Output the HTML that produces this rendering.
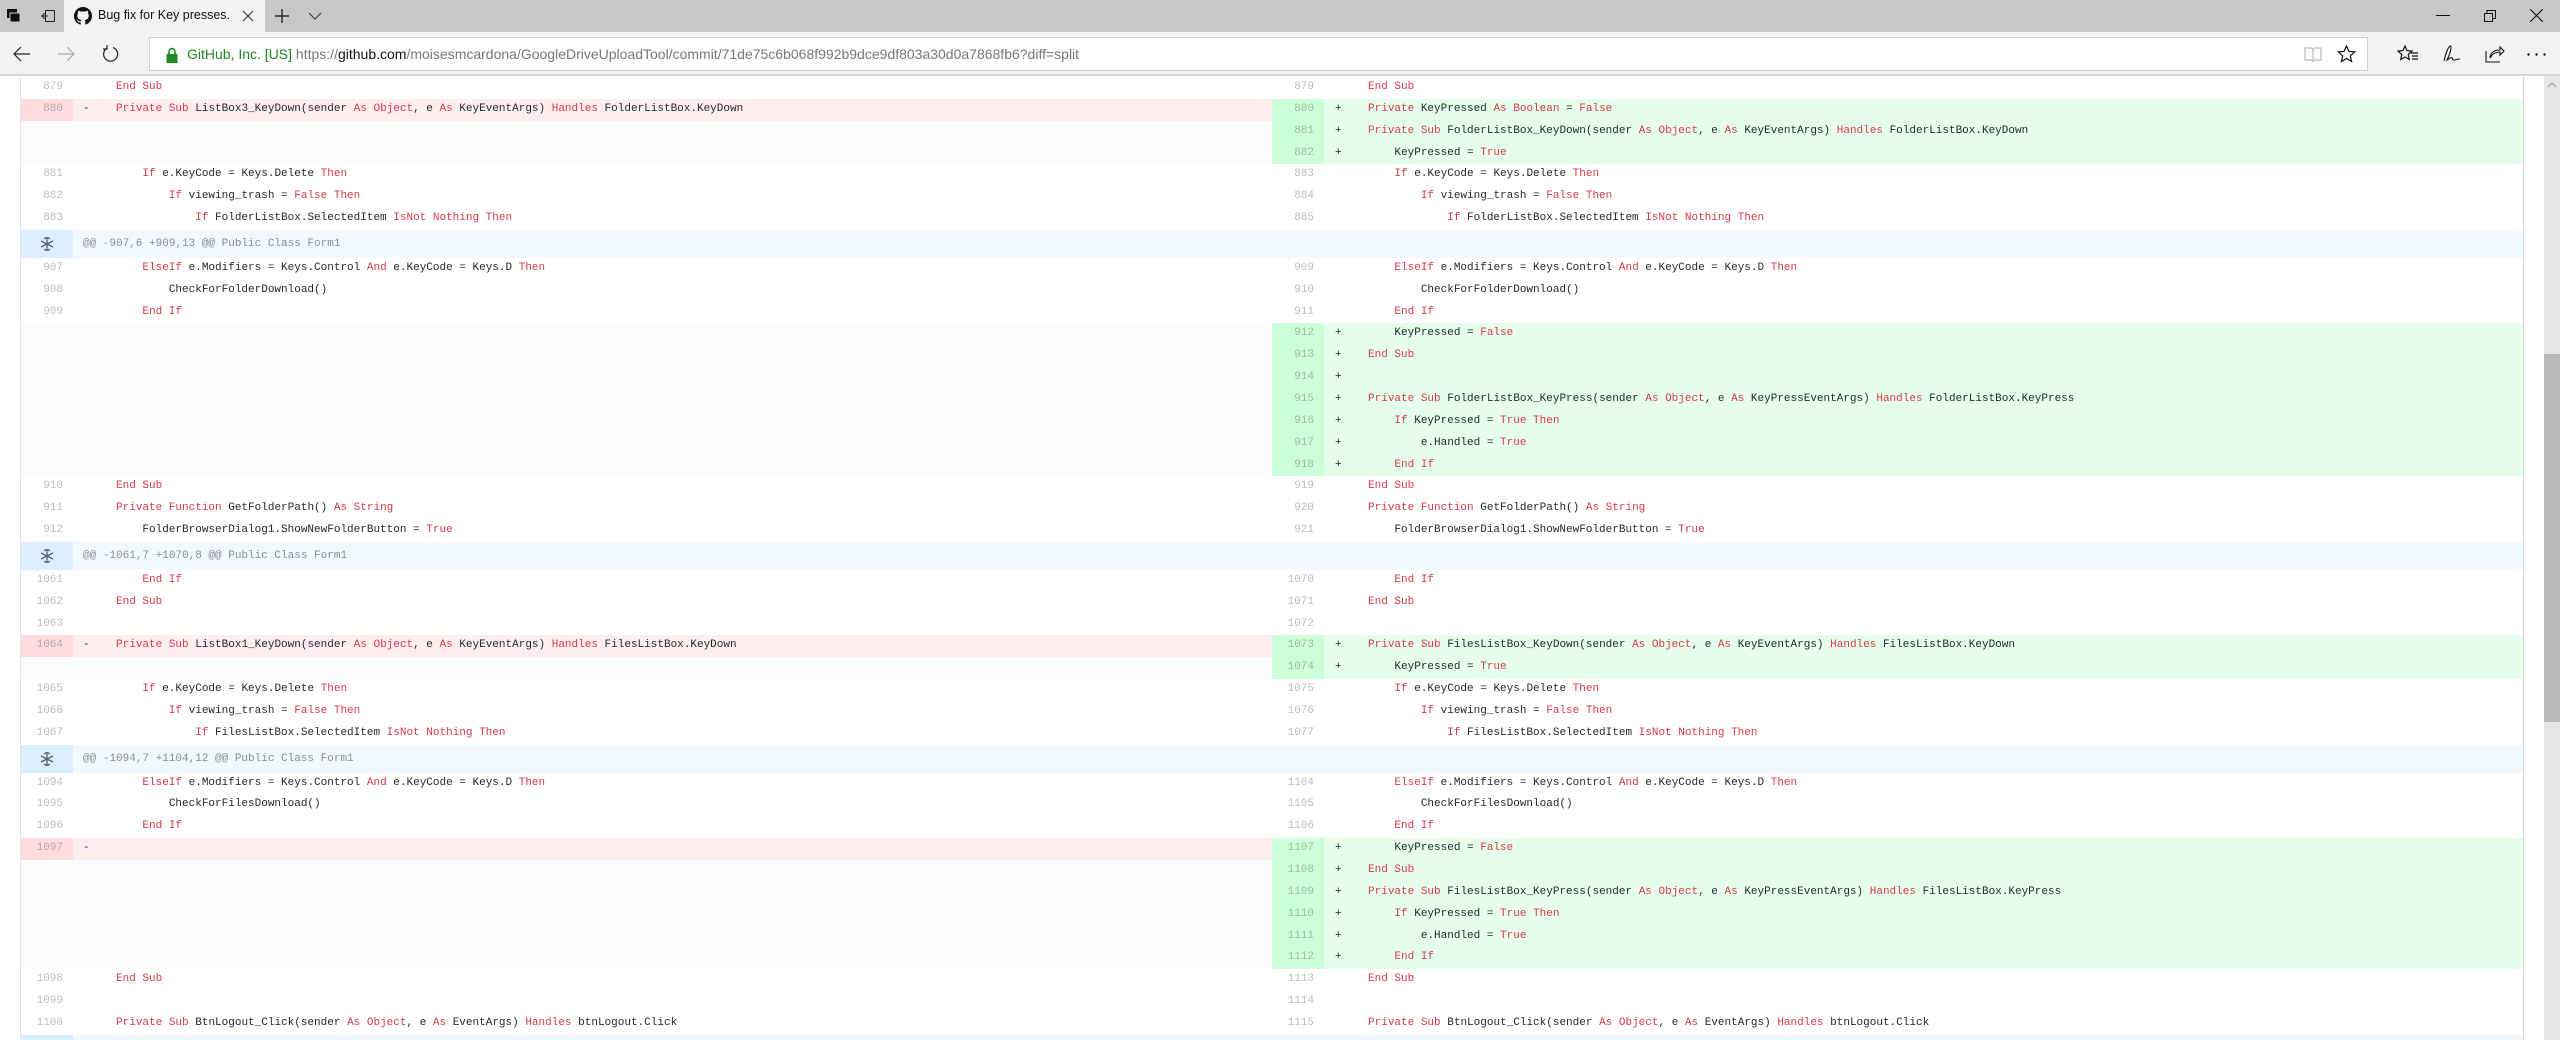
<!DOCTYPE html>
<html><head><meta charset="utf-8">
<style>
*{margin:0;padding:0;box-sizing:border-box}
html,body{width:2560px;height:1040px;overflow:hidden;background:#fff;font-family:"Liberation Sans",sans-serif}
#tabs{position:absolute;left:0;top:0;width:2560px;height:32px;background:#c7c7c7}
#tab{position:absolute;left:64px;top:0;width:201px;height:32px;background:#f2f2f2}
#tab span{position:absolute;left:34px;top:8px;font-size:12.5px;color:#111}
#bar{position:absolute;left:0;top:32px;width:2560px;height:43px;background:#f2f2f2;border-bottom:1px solid #d4d4d4}
#addr{position:absolute;left:149px;top:37px;width:2219px;height:34px;background:#fff;border:1px solid #d0d0d0}
#addr .t{position:absolute;left:37px;top:8px;font-size:14px;color:#777;white-space:pre}
#sep{position:absolute;left:0;top:75px;width:2560px;height:1px;background:#dadada}
svg{position:absolute}
#content{position:absolute;left:0;top:77px;width:2544px;height:963px;overflow:hidden}
#file{position:absolute;left:20px;top:0;width:2504px;border-left:1px solid #e1e4e8;border-right:1px solid #d5d5d5;height:970px}
.r{display:flex;height:21.85px;font-family:"Liberation Mono",monospace;font-size:11px;line-height:21.85px;color:#24292e}
.n{width:52px;flex:none;text-align:right;padding-right:10px;color:rgba(27,31,35,.3)}
.c{width:1199px;flex:none;white-space:pre;padding-left:10px;overflow:hidden}
.r>.n:nth-child(3){width:52px}
.r>.c:nth-child(4){width:1199px;padding-left:11px}
.d.n{background:#ffdce0}.d.c{background:#ffeef0}
.a.n{background:#cdffd8}.a.c{background:#e6ffed}
.e{background:#fafbfc}
i{font-style:normal;color:#d73a49}
.h{display:flex;height:28px;background:#f1f8ff;font-family:"Liberation Mono",monospace;font-size:11px;line-height:28px;color:rgba(27,31,35,.5)}
.h .n{background:#dbedff;position:relative}
.h .t{padding-left:10px;white-space:pre}
#sb{position:absolute;left:2544px;top:76px;width:16px;height:964px;background:#e6e6e6}
#thumb{position:absolute;left:2544px;top:354px;width:16px;height:368px;background:#bababa}
</style></head><body>
<div id="tabs">
<svg style="left:6px;top:8px" width="16" height="16" viewBox="0 0 16 16"><rect x="1" y="1" width="10" height="9" fill="#111"/><rect x="4" y="5" width="10" height="9" fill="#111" stroke="#c7c7c7" stroke-width="1"/></svg>
<svg style="left:40px;top:9px" width="16" height="14" viewBox="0 0 16 14" fill="none" stroke="#222" stroke-width="1"><rect x="5.5" y="1.5" width="9" height="11"/><path d="M1 7h7M5 4l-3 3 3 3"/></svg>
<div id="tab"><svg style="left:10px;top:7px" width="18" height="18" viewBox="0 0 16 16"><path fill="#111" d="M8 0C3.58 0 0 3.58 0 8c0 3.540 2.29 6.53 5.47 7.59.4.07.55-.17.55-.38 0-.19-.01-.82-.01-1.490-2.010.37-2.53-.49-2.69-.94-.09-.23-.48-.94-.82-1.130-.28-.15-.68-.52-.01-.53.63-.01 1.080.58 1.230.82.72 1.210 1.870.87 2.330.66.07-.52.28-.87.51-1.070-1.780-.2-3.640-.89-3.640-3.950 0-.87.31-1.590.82-2.150-.08-.2-.36-1.020.08-2.120 0 0 .67-.21 2.200.82.64-.18 1.320-.27 2-.27.68 0 1.360.09 2 .27 1.530-1.040 2.200-.82 2.200-.82.44 1.100.16 1.920.08 2.120.51.56.82 1.270.82 2.150 0 3.070-1.870 3.750-3.650 3.950.29.25.54.73.54 1.480 0 1.070-.01 1.930-.01 2.200 0 .21.15.46.55.38A8.013 8.013 0 0016 8c0-4.420-3.580-8-8-8z"/></svg><span>Bug fix for Key presses.</span>
<svg style="left:178px;top:10px" width="12" height="12" viewBox="0 0 12 12" stroke="#333" stroke-width="1.1"><path d="M1 1l10 10M11 1L1 11"/></svg></div>
<svg style="left:275px;top:9px" width="14" height="14" viewBox="0 0 14 14" stroke="#111" stroke-width="1.2"><path d="M7 0v14M0 7h14"/></svg>
<svg style="left:308px;top:12px" width="14" height="8" viewBox="0 0 14 8" fill="none" stroke="#333" stroke-width="1"><path d="M1 1l6 6 6-6"/></svg>
<svg style="left:2436px;top:15px" width="14" height="2" viewBox="0 0 14 2"><rect width="14" height="1" fill="#111"/></svg>
<svg style="left:2484px;top:10px" width="12" height="12" viewBox="0 0 12 12" fill="none" stroke="#111" stroke-width="1"><rect x="0.5" y="3.5" width="8" height="8"/><path d="M3 3.5V.5h8.5v8H8.5"/></svg>
<svg style="left:2530px;top:9px" width="13" height="13" viewBox="0 0 13 13" stroke="#111" stroke-width="1"><path d="M0 0l13 13M13 0L0 13"/></svg>
</div>
<div id="bar">
<svg style="left:13px;top:14px" width="18" height="16" viewBox="0 0 18 16" fill="none" stroke="#222" stroke-width="1.2"><path d="M17 8H1M8 1L1 8l7 7"/></svg>
<svg style="left:57px;top:14px" width="18" height="16" viewBox="0 0 18 16" fill="none" stroke="#aaa" stroke-width="1.2"><path d="M1 8h16M10 1l7 7-7 7"/></svg>
<svg style="left:102px;top:13px" width="17" height="18" viewBox="0 0 17 18" fill="none" stroke="#222" stroke-width="1.2"><path d="M5 3.2A7 7 0 1 0 11 2.6"/><path d="M5 0v4H1"/></svg>
</div>
<div id="addr">
<svg style="left:16px;top:9px" width="12" height="16" viewBox="0 0 12 16"><path d="M3 7V4.5a3 3 0 0 1 6 0V7" fill="none" stroke="#1d8a24" stroke-width="1.6"/><rect x="0.5" y="7" width="11" height="9" fill="#1d8a24"/></svg>
<div class="t"><span style="color:#1d8a24">GitHub, Inc. [US]</span> https://<span style="color:#111">github.com</span>/moisesmcardona/GoogleDriveUploadTool/commit/71de75c6b068f992b9dce9df803a30d0a7868fb6?diff=split</div>
<svg style="left:2154px;top:9px" width="18" height="15" viewBox="0 0 18 15" fill="none" stroke="#bbb" stroke-width="1.2"><path d="M1 1h6.5l1.5 1.5L10.5 1H17v12h-6.5L9 14.5 7.5 13H1z"/><path d="M9 2.5v12"/></svg>
<svg style="left:2187px;top:7px" width="19" height="18" viewBox="0 0 19 18" fill="none" stroke="#111" stroke-width="1.2"><path d="M9.5 1l2.4 5.3 5.8.6-4.4 3.9 1.3 5.7-5.1-3-5.1 3 1.3-5.7L1.3 6.9l5.8-.6z"/></svg>
</div>
<svg style="left:2397px;top:45px" width="22" height="18" viewBox="0 0 22 18" fill="none" stroke="#111" stroke-width="1.2"><path d="M8 1l2 4.6 5 .5-3.8 3.4 1.1 5-4.3-2.6-4.3 2.6 1.1-5L1 6.1l5-.5z"/><path d="M14 8h7M15 11h6M15 14h6"/></svg>
<svg style="left:2442px;top:44px" width="20" height="20" viewBox="0 0 20 20" fill="none" stroke="#111" stroke-width="1.1"><path d="M2 17c1-5 4-14 6-15s1 6-3 14c3-2 4-3 5-2s0 2 2 2 4-1 6-1"/></svg>
<svg style="left:2485px;top:45px" width="20" height="18" viewBox="0 0 20 18" fill="none" stroke="#111" stroke-width="1.1"><path d="M1 6v11h14"/><path d="M5 13c0-5 4-8 10-8V2l4 4-4 4V7c-4 0-8 2-10 6z"/></svg>
<svg style="left:2527px;top:53px" width="20" height="3" viewBox="0 0 20 3" fill="#111"><circle cx="1.5" cy="1.5" r="1.2"/><circle cx="9.5" cy="1.5" r="1.2"/><circle cx="17.5" cy="1.5" r="1.2"/></svg>
<div id="sep"></div>
<div id="content"><div id="file">
<div class="r"><div class="n">879</div><div class="c">     <i>End Sub</i></div><div class="n">879</div><div class="c">     <i>End Sub</i></div></div>
<div class="r"><div class="n d">880</div><div class="c d">-    <i>Private Sub</i> ListBox3_KeyDown(sender <i>As Object</i>, e <i>As</i> KeyEventArgs) <i>Handles</i> FolderListBox.KeyDown</div><div class="n a">880</div><div class="c a">+    <i>Private</i> KeyPressed <i>As Boolean</i> = <i>False</i></div></div>
<div class="r"><div class="n e"></div><div class="c e"></div><div class="n a">881</div><div class="c a">+    <i>Private Sub</i> FolderListBox_KeyDown(sender <i>As Object</i>, e <i>As</i> KeyEventArgs) <i>Handles</i> FolderListBox.KeyDown</div></div>
<div class="r"><div class="n e"></div><div class="c e"></div><div class="n a">882</div><div class="c a">+        KeyPressed = <i>True</i></div></div>
<div class="r"><div class="n">881</div><div class="c">         <i>If</i> e.KeyCode = Keys.Delete <i>Then</i></div><div class="n">883</div><div class="c">         <i>If</i> e.KeyCode = Keys.Delete <i>Then</i></div></div>
<div class="r"><div class="n">882</div><div class="c">             <i>If</i> viewing_trash = <i>False Then</i></div><div class="n">884</div><div class="c">             <i>If</i> viewing_trash = <i>False Then</i></div></div>
<div class="r"><div class="n">883</div><div class="c">                 <i>If</i> FolderListBox.SelectedItem <i>IsNot Nothing Then</i></div><div class="n">885</div><div class="c">                 <i>If</i> FolderListBox.SelectedItem <i>IsNot Nothing Then</i></div></div>
<div class="h"><div class="n"><svg style="left:19px;top:7px" width="14" height="14" viewBox="0 0 14 14" fill="none" stroke="#586069" stroke-width="1.3"><path d="M7 0v14M4 2l3-2 3 2M4 12l3 2 3-2M1 4l12 6M13 4L1 10"/></svg></div><div class="t">@@ -907,6 +909,13 @@ Public Class Form1</div></div>
<div class="r"><div class="n">907</div><div class="c">         <i>ElseIf</i> e.Modifiers = Keys.Control <i>And</i> e.KeyCode = Keys.D <i>Then</i></div><div class="n">909</div><div class="c">         <i>ElseIf</i> e.Modifiers = Keys.Control <i>And</i> e.KeyCode = Keys.D <i>Then</i></div></div>
<div class="r"><div class="n">908</div><div class="c">             CheckForFolderDownload()</div><div class="n">910</div><div class="c">             CheckForFolderDownload()</div></div>
<div class="r"><div class="n">909</div><div class="c">         <i>End If</i></div><div class="n">911</div><div class="c">         <i>End If</i></div></div>
<div class="r"><div class="n e"></div><div class="c e"></div><div class="n a">912</div><div class="c a">+        KeyPressed = <i>False</i></div></div>
<div class="r"><div class="n e"></div><div class="c e"></div><div class="n a">913</div><div class="c a">+    <i>End Sub</i></div></div>
<div class="r"><div class="n e"></div><div class="c e"></div><div class="n a">914</div><div class="c a">+</div></div>
<div class="r"><div class="n e"></div><div class="c e"></div><div class="n a">915</div><div class="c a">+    <i>Private Sub</i> FolderListBox_KeyPress(sender <i>As Object</i>, e <i>As</i> KeyPressEventArgs) <i>Handles</i> FolderListBox.KeyPress</div></div>
<div class="r"><div class="n e"></div><div class="c e"></div><div class="n a">916</div><div class="c a">+        <i>If</i> KeyPressed = <i>True Then</i></div></div>
<div class="r"><div class="n e"></div><div class="c e"></div><div class="n a">917</div><div class="c a">+            e.Handled = <i>True</i></div></div>
<div class="r"><div class="n e"></div><div class="c e"></div><div class="n a">918</div><div class="c a">+        <i>End If</i></div></div>
<div class="r"><div class="n">910</div><div class="c">     <i>End Sub</i></div><div class="n">919</div><div class="c">     <i>End Sub</i></div></div>
<div class="r"><div class="n">911</div><div class="c">     <i>Private Function</i> GetFolderPath() <i>As String</i></div><div class="n">920</div><div class="c">     <i>Private Function</i> GetFolderPath() <i>As String</i></div></div>
<div class="r"><div class="n">912</div><div class="c">         FolderBrowserDialog1.ShowNewFolderButton = <i>True</i></div><div class="n">921</div><div class="c">         FolderBrowserDialog1.ShowNewFolderButton = <i>True</i></div></div>
<div class="h"><div class="n"><svg style="left:19px;top:7px" width="14" height="14" viewBox="0 0 14 14" fill="none" stroke="#586069" stroke-width="1.3"><path d="M7 0v14M4 2l3-2 3 2M4 12l3 2 3-2M1 4l12 6M13 4L1 10"/></svg></div><div class="t">@@ -1061,7 +1070,8 @@ Public Class Form1</div></div>
<div class="r"><div class="n">1061</div><div class="c">         <i>End If</i></div><div class="n">1070</div><div class="c">         <i>End If</i></div></div>
<div class="r"><div class="n">1062</div><div class="c">     <i>End Sub</i></div><div class="n">1071</div><div class="c">     <i>End Sub</i></div></div>
<div class="r"><div class="n">1063</div><div class="c"> </div><div class="n">1072</div><div class="c"> </div></div>
<div class="r"><div class="n d">1064</div><div class="c d">-    <i>Private Sub</i> ListBox1_KeyDown(sender <i>As Object</i>, e <i>As</i> KeyEventArgs) <i>Handles</i> FilesListBox.KeyDown</div><div class="n a">1073</div><div class="c a">+    <i>Private Sub</i> FilesListBox_KeyDown(sender <i>As Object</i>, e <i>As</i> KeyEventArgs) <i>Handles</i> FilesListBox.KeyDown</div></div>
<div class="r"><div class="n e"></div><div class="c e"></div><div class="n a">1074</div><div class="c a">+        KeyPressed = <i>True</i></div></div>
<div class="r"><div class="n">1065</div><div class="c">         <i>If</i> e.KeyCode = Keys.Delete <i>Then</i></div><div class="n">1075</div><div class="c">         <i>If</i> e.KeyCode = Keys.Delete <i>Then</i></div></div>
<div class="r"><div class="n">1066</div><div class="c">             <i>If</i> viewing_trash = <i>False Then</i></div><div class="n">1076</div><div class="c">             <i>If</i> viewing_trash = <i>False Then</i></div></div>
<div class="r"><div class="n">1067</div><div class="c">                 <i>If</i> FilesListBox.SelectedItem <i>IsNot Nothing Then</i></div><div class="n">1077</div><div class="c">                 <i>If</i> FilesListBox.SelectedItem <i>IsNot Nothing Then</i></div></div>
<div class="h"><div class="n"><svg style="left:19px;top:7px" width="14" height="14" viewBox="0 0 14 14" fill="none" stroke="#586069" stroke-width="1.3"><path d="M7 0v14M4 2l3-2 3 2M4 12l3 2 3-2M1 4l12 6M13 4L1 10"/></svg></div><div class="t">@@ -1094,7 +1104,12 @@ Public Class Form1</div></div>
<div class="r"><div class="n">1094</div><div class="c">         <i>ElseIf</i> e.Modifiers = Keys.Control <i>And</i> e.KeyCode = Keys.D <i>Then</i></div><div class="n">1104</div><div class="c">         <i>ElseIf</i> e.Modifiers = Keys.Control <i>And</i> e.KeyCode = Keys.D <i>Then</i></div></div>
<div class="r"><div class="n">1095</div><div class="c">             CheckForFilesDownload()</div><div class="n">1105</div><div class="c">             CheckForFilesDownload()</div></div>
<div class="r"><div class="n">1096</div><div class="c">         <i>End If</i></div><div class="n">1106</div><div class="c">         <i>End If</i></div></div>
<div class="r"><div class="n d">1097</div><div class="c d">-</div><div class="n a">1107</div><div class="c a">+        KeyPressed = <i>False</i></div></div>
<div class="r"><div class="n e"></div><div class="c e"></div><div class="n a">1108</div><div class="c a">+    <i>End Sub</i></div></div>
<div class="r"><div class="n e"></div><div class="c e"></div><div class="n a">1109</div><div class="c a">+    <i>Private Sub</i> FilesListBox_KeyPress(sender <i>As Object</i>, e <i>As</i> KeyPressEventArgs) <i>Handles</i> FilesListBox.KeyPress</div></div>
<div class="r"><div class="n e"></div><div class="c e"></div><div class="n a">1110</div><div class="c a">+        <i>If</i> KeyPressed = <i>True Then</i></div></div>
<div class="r"><div class="n e"></div><div class="c e"></div><div class="n a">1111</div><div class="c a">+            e.Handled = <i>True</i></div></div>
<div class="r"><div class="n e"></div><div class="c e"></div><div class="n a">1112</div><div class="c a">+        <i>End If</i></div></div>
<div class="r"><div class="n">1098</div><div class="c">     <i>End Sub</i></div><div class="n">1113</div><div class="c">     <i>End Sub</i></div></div>
<div class="r"><div class="n">1099</div><div class="c"> </div><div class="n">1114</div><div class="c"> </div></div>
<div class="r"><div class="n">1100</div><div class="c">     <i>Private Sub</i> BtnLogout_Click(sender <i>As Object</i>, e <i>As</i> EventArgs) <i>Handles</i> btnLogout.Click</div><div class="n">1115</div><div class="c">     <i>Private Sub</i> BtnLogout_Click(sender <i>As Object</i>, e <i>As</i> EventArgs) <i>Handles</i> btnLogout.Click</div></div>
<div class="h"><div class="n"><svg style="left:19px;top:7px" width="14" height="14" viewBox="0 0 14 14" fill="none" stroke="#586069" stroke-width="1.3"><path d="M7 0v14M4 2l3-2 3 2M4 12l3 2 3-2M1 4l12 6M13 4L1 10"/></svg></div><div class="t"></div></div>
</div></div>
<div id="sb"></div>
<div id="thumb"></div>
<svg style="left:2547px;top:82px" width="10" height="6" viewBox="0 0 10 6" fill="none" stroke="#999" stroke-width="1"><path d="M1 5l4-4 4 4"/></svg>
</body></html>
